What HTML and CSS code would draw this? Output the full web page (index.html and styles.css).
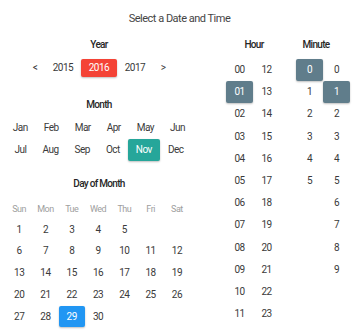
FILE: index.html
```html
<!DOCTYPE html>
<html>
<head>
<meta charset="utf-8">
<link rel="stylesheet" href="styles.css">
</head>
<body>
<div class="title">Select a Date and Time</div>
<div class="main">
  <div class="left">
    <div class="label">Year</div>
    <div class="years">
      <span class="arrow">&lt;</span>
      <span class="year">2015</span>
      <span class="year sel-red">2016</span>
      <span class="year">2017</span>
      <span class="arrow">&gt;</span>
    </div>
    <div class="label month-label">Month</div>
    <div class="months first">
      <span class="m">Jan</span><span class="m">Feb</span><span class="m">Mar</span><span class="m">Apr</span><span class="m">May</span><span class="m">Jun</span>
    </div>
    <div class="months">
      <span class="m">Jul</span><span class="m">Aug</span><span class="m">Sep</span><span class="m">Oct</span><span class="m sel-teal">Nov</span><span class="m">Dec</span>
    </div>
    <div class="label day-label">Day of Month</div>
    <div class="weekdays">
      <span class="wd">Sun</span><span class="wd">Mon</span><span class="wd">Tue</span><span class="wd">Wed</span><span class="wd">Thu</span><span class="wd">Fri</span><span class="wd">Sat</span>
    </div>
    <div class="days">
      <span class="d">1</span><span class="d">2</span><span class="d">3</span><span class="d">4</span><span class="d">5</span><span class="d"></span><span class="d"></span>
      <span class="d">6</span><span class="d">7</span><span class="d">8</span><span class="d">9</span><span class="d">10</span><span class="d">11</span><span class="d">12</span>
      <span class="d">13</span><span class="d">14</span><span class="d">15</span><span class="d">16</span><span class="d">17</span><span class="d">18</span><span class="d">19</span>
      <span class="d">20</span><span class="d">21</span><span class="d">22</span><span class="d">23</span><span class="d">24</span><span class="d">25</span><span class="d">26</span>
      <span class="d">27</span><span class="d">28</span><span class="d sel-blue">29</span><span class="d">30</span><span class="d"></span><span class="d"></span><span class="d"></span>
    </div>
  </div>
  <div class="right">
    <div class="group hours">
      <div class="label">Hour</div>
      <div class="tgrid">
        <span class="t">00</span><span class="t">12</span>
        <span class="t sel-slate">01</span><span class="t">13</span>
        <span class="t">02</span><span class="t">14</span>
        <span class="t">03</span><span class="t">15</span>
        <span class="t">04</span><span class="t">16</span>
        <span class="t">05</span><span class="t">17</span>
        <span class="t">06</span><span class="t">18</span>
        <span class="t">07</span><span class="t">19</span>
        <span class="t">08</span><span class="t">20</span>
        <span class="t">09</span><span class="t">21</span>
        <span class="t">10</span><span class="t">22</span>
        <span class="t">11</span><span class="t">23</span>
      </div>
    </div>
    <div class="group minutes">
      <div class="label">Minute</div>
      <div class="tgrid mgrid">
        <span class="t sel-slate">0</span><span class="t">0</span>
        <span class="t">1</span><span class="t sel-slate">1</span>
        <span class="t">2</span><span class="t">2</span>
        <span class="t">3</span><span class="t">3</span>
        <span class="t">4</span><span class="t">4</span>
        <span class="t">5</span><span class="t">5</span>
        <span class="t"></span><span class="t">6</span>
        <span class="t"></span><span class="t">7</span>
        <span class="t"></span><span class="t">8</span>
        <span class="t"></span><span class="t">9</span>
      </div>
    </div>
  </div>
</div>
</body>
</html>
```

FILE: styles.css
```css
html, body {
  margin: 0;
  padding: 0;
  background: #ffffff;
}
body {
  font-family: Roboto, "Liberation Sans", sans-serif;
  font-size: 10px;
  letter-spacing: -0.5px;
  color: #3a3a3a;
  width: 359px;
  height: 334px;
  overflow: hidden;
}
.title {
  text-align: center;
  font-size: 11px;
  letter-spacing: -0.5px;
  color: #444;
  height: 38px;
  line-height: 38px;
}
.main {
  display: flex;
}
.left {
  width: 198px;
  display: flex;
  flex-direction: column;
}
.label {
  text-align: center;
  font-weight: 500;
  letter-spacing: -0.7px;
  color: #262626;
  height: 14px;
  line-height: 14px;
}
.years {
  margin-top: 7px;
  display: flex;
  justify-content: center;
  height: 18px;
  line-height: 18px;
}
.arrow {
  width: 20px;
  text-align: center;
}
.year {
  width: 36px;
  text-align: center;
}
.sel-red, .sel-teal, .sel-blue, .sel-slate {
  color: #fff;
  border-radius: 2px;
  box-shadow: 0 1px 2px rgba(0,0,0,0.25);
}
.sel-red { background: #f44336; }
.sel-teal { background: #26a69a; }
.sel-blue { background: #2196f3; }
.sel-slate { background: #607d8b; }
.month-label {
  margin-top: 21px;
}
.months {
  display: flex;
  justify-content: center;
  height: 22px;
  line-height: 22px;
}
.months.first {
  margin-top: 5px;
}
.m {
  padding: 0 8px;
  text-align: center;
}
.day-label {
  margin-top: 16px;
}
.weekdays {
  margin-top: 11px;
  margin-left: 6px;
  display: grid;
  grid-template-columns: repeat(7, 26.3px);
  height: 14px;
  line-height: 14px;
}
.wd {
  color: #9e9e9e;
  text-align: center;
  font-size: 9px;
}
.days {
  margin-top: 2.5px;
  margin-left: 6px;
  display: grid;
  grid-template-columns: repeat(7, 26.3px);
  grid-auto-rows: 21.8px;
  line-height: 21px;
}
.d {
  text-align: center;
  height: 21px;
}
.right {
  display: flex;
  margin-left: 28px;
}
.group {
  display: flex;
  flex-direction: column;
}
.hours { width: 56px; }
.minutes { width: 68px; }
.tgrid {
  margin-top: 7px;
  display: grid;
  grid-template-columns: 27px 27px;
  grid-auto-rows: 22.2px;
  line-height: 22px;
}
.mgrid {
  margin-left: 14px;
}
.t {
  text-align: center;
  height: 22px;
}
```
